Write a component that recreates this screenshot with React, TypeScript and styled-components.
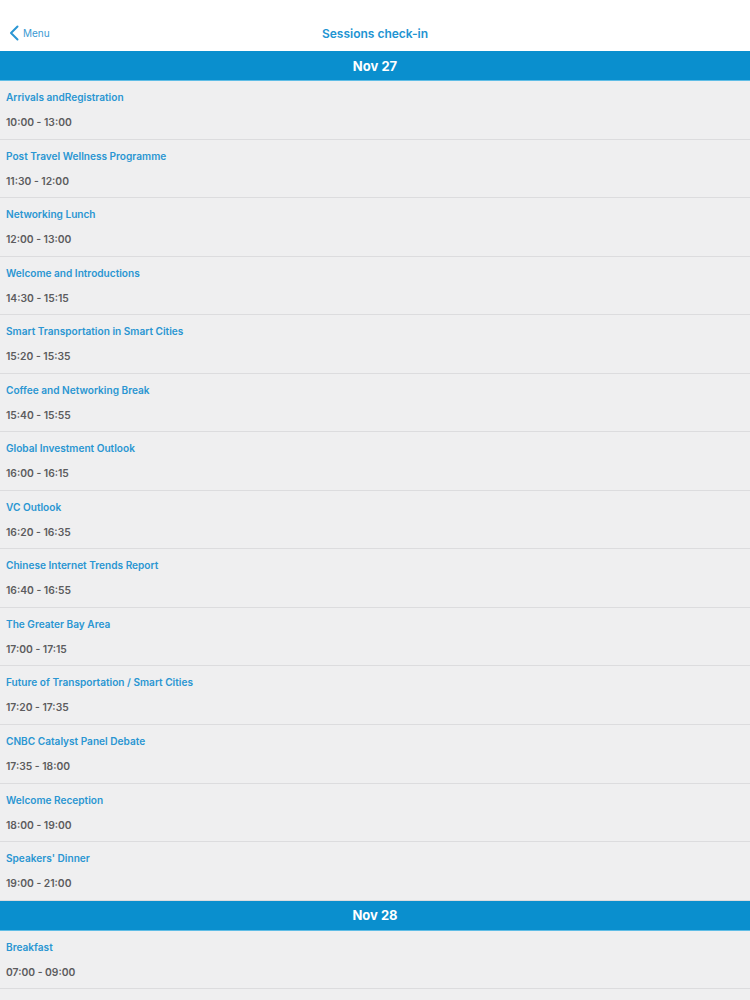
import styled, { createGlobalStyle } from "styled-components";

const GlobalStyle = createGlobalStyle`
  body {
    margin: 0;
    background: #efeff0;
    font-family: Inter, "Noto Sans", sans-serif;
  }
`;

type Session = { title: string; time: string };

const days: { label: string; sessions: Session[] }[] = [
  {
    label: "Nov 27",
    sessions: [
      { title: "Arrivals andRegistration", time: "10:00 - 13:00" },
      { title: "Post Travel Wellness Programme", time: "11:30 - 12:00" },
      { title: "Networking Lunch", time: "12:00 - 13:00" },
      { title: "Welcome and Introductions", time: "14:30 - 15:15" },
      { title: "Smart Transportation in Smart Cities", time: "15:20 - 15:35" },
      { title: "Coffee and Networking Break", time: "15:40 - 15:55" },
      { title: "Global Investment Outlook", time: "16:00 - 16:15" },
      { title: "VC Outlook", time: "16:20 - 16:35" },
      { title: "Chinese Internet Trends Report", time: "16:40 - 16:55" },
      { title: "The Greater Bay Area", time: "17:00 - 17:15" },
      { title: "Future of Transportation / Smart Cities", time: "17:20 - 17:35" },
      { title: "CNBC Catalyst Panel Debate", time: "17:35 - 18:00" },
      { title: "Welcome Reception", time: "18:00 - 19:00" },
      { title: "Speakers' Dinner", time: "19:00 - 21:00" },
    ],
  },
  {
    label: "Nov 28",
    sessions: [{ title: "Breakfast", time: "07:00 - 09:00" }],
  },
];

export default function App() {
  return (
    <Page>
      <GlobalStyle />
      <NavBar>
        <BackButton>
          <svg width="10" height="16" viewBox="0 0 10 16">
            <path
              d="M8.5 1.5 L2 8 L8.5 14.5"
              fill="none"
              stroke="#2a96d4"
              strokeWidth="2"
              strokeLinecap="round"
              strokeLinejoin="round"
            />
          </svg>
          <span>Menu</span>
        </BackButton>
        <NavTitle>Sessions check-in</NavTitle>
      </NavBar>
      {days.map((day) => (
        <section key={day.label}>
          <DayHeader>{day.label}</DayHeader>
          {day.sessions.map((s) => (
            <Row key={s.title}>
              <Title>{s.title}</Title>
              <Time>{s.time}</Time>
            </Row>
          ))}
        </section>
      ))}
    </Page>
  );
}

const Page = styled.div`
  width: 750px;
  height: 1000px;
  overflow: hidden;
  background: #efeff0;
`;

const NavBar = styled.header`
  position: relative;
  height: 51px;
  background: #ffffff;
  display: flex;
  align-items: center;
  justify-content: center;
`;

const BackButton = styled.div`
  position: absolute;
  left: 9px;
  top: 25px;
  display: flex;
  align-items: center;
  gap: 4px;
  color: #3a9ad3;
  font-size: 10px;
  & svg {
    display: block;
  }
`;

const NavTitle = styled.h1`
  margin: 16px 0 0;
  font-size: 12px;
  font-weight: 600;
  color: #2294d2;
`;

const DayHeader = styled.div`
  height: 30px;
  background: #0a8fce;
  border-bottom: 1px solid #5fbde6;
  box-sizing: border-box;
  display: flex;
  align-items: center;
  justify-content: center;
  color: #ffffff;
  font-size: 13px;
  font-weight: 700;
`;

const Row = styled.div`
  height: 58.55px;
  box-sizing: border-box;
  border-bottom: 1px solid #dcdcde;
  padding: 10px 6px 0;
  display: flex;
  flex-direction: column;
  gap: 12px;
`;

const Title = styled.div`
  font-size: 10.1px;
  font-weight: 600;
  color: #2a96d2;
  line-height: 13px;
`;

const Time = styled.div`
  font-size: 10.3px;
  font-weight: 600;
  color: #5c5c5e;
  line-height: 13px;
`;
